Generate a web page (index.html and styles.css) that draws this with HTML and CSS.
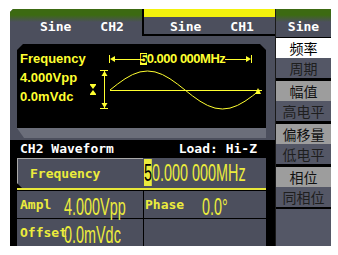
FILE: index.html
```html
<!DOCTYPE html>
<html lang="en">
<head>
    <meta charset="UTF-8">
    <meta name="viewport" content="width=device-width, initial-scale=1.0">
    <title>CH2 Sine</title>
    <link rel="stylesheet" href="styles.css">
</head>
<body>
    <div class="device">
        <div class="main">
            <div class="tabs">
                <div class="tab active"><span>Sine</span><span>CH2</span></div>
                <div class="tab other"><span>Sine</span><span>CH1</span></div>
            </div>

            <div class="frame">
                <div class="screen">
                    <div class="readings">
                        <div>Frequency</div>
                        <div>4.000Vpp</div>
                        <div>0.0mVdc</div>
                    </div>
                    <div class="scope">
                        <div class="freq-line">
                            <svg width="32" height="12" viewBox="0 0 32 12">
                                <line x1="1.5" y1="2" x2="1.5" y2="10" />
                                <polygon points="2,6 7,3 7,9" />
                                <line x1="7" y1="6.5" x2="32" y2="6.5" />
                            </svg>
                            <span class="cursor">5</span><span>0.000 000MHz</span>
                            <svg width="28" height="12" viewBox="0 0 28 12">
                                <line x1="0" y1="6.5" x2="22" y2="6.5" />
                                <polygon points="26,6 21,3 21,9" />
                                <line x1="26.5" y1="2" x2="26.5" y2="10" />
                            </svg>
                        </div>
                        <svg class="wave" width="178" height="48" viewBox="0 0 178 48">
                            <!-- offset marker -->
                            <line x1="2" y1="18.5" x2="8" y2="18.5" />
                            <polygon points="2,19 8,19 5,23" />
                            <polygon points="2,28 8,28 5,24" />
                            <line x1="2" y1="28.5" x2="8" y2="28.5" />
                            <!-- amplitude marker -->
                            <line x1="12" y1="4.5" x2="20" y2="4.5" />
                            <line x1="16.5" y1="4" x2="16.5" y2="42" />
                            <line x1="12" y1="42.5" x2="20" y2="42.5" />
                            <polygon points="16.5,5 13.5,10 19.5,10" />
                            <polygon points="16.5,42 13.5,37 19.5,37" />
                            <!-- axis and wave -->
                            <line x1="22" y1="24.5" x2="174" y2="24.5" />
                            <polyline points="22,24 29.5,18.1 37,12.8 44.5,8.6 52,5.9 59.5,5 67,5.9 74.5,8.6 82,12.8 89.5,18.1 97,24 104.5,29.9 112,35.2 119.5,39.4 127,42.1 134.5,43 142,42.1 149.5,39.4 157,35.2 164.5,29.9 172,24" />
                            <polygon points="167,28 173,28 170,22" />
                        </svg>
                    </div>
                </div>
                <div class="ledge"></div>
            </div>

            <div class="info">
                <span>CH2 Waveform</span>
                <span>Load: Hi-Z</span>
            </div>

            <div class="params">
                <div class="row current">
                    <div class="cell key">Frequency</div>
                    <div class="cell"><span class="value"><span class="cursor">5</span>0.000 000MHz</span></div>
                </div>
                <div class="row">
                    <div class="cell"><span class="label">Ampl</span><span class="value">4.000Vpp</span></div>
                    <div class="cell"><span class="label wide">Phase</span><span class="value">0.0°</span></div>
                </div>
                <div class="row">
                    <div class="cell"><span class="label">Offset</span><span class="value">0.0mVdc</span></div>
                    <div class="cell"></div>
                </div>
            </div>
        </div>

        <div class="menu">
            <div class="menu-head">Sine</div>
            <div class="group">
                <div class="item on">频率</div>
                <div class="item">周期</div>
            </div>
            <div class="group">
                <div class="item key">幅值</div>
                <div class="item">高电平</div>
            </div>
            <div class="group">
                <div class="item key">偏移量</div>
                <div class="item">低电平</div>
            </div>
            <div class="group">
                <div class="item key">相位</div>
                <div class="item">同相位</div>
            </div>
            <div class="menu-rest"></div>
        </div>
    </div>
</body>
</html>
```

FILE: styles.css
```css
body {
    margin: 0;
    background: #fff;
    font-family: "DejaVu Sans Mono", monospace;
}

.device {
    display: flex;
    width: 321px;
    height: 237px;
    margin: 9px 0 0 10px;
}

.main {
    width: 265px;
    display: flex;
    flex-direction: column;
    background: #4c4f5d;
    clip-path: polygon(3px 0, 100% 0, 100% 100%, 0 100%, 0 3px);
}

/* channel tabs */
.tabs {
    display: flex;
    height: 27px;
}

.tab {
    display: flex;
    gap: 29px;
    box-sizing: border-box;
    padding: 10px 0 0 30px;
    color: #fff;
    font-weight: bold;
    font-size: 13px;
    line-height: 15px;
}

.tab.active {
    width: 132px;
    background: linear-gradient(#3c6a12 0, #3c6a12 6px, #4c4f5d 13px);
}

.tab.other {
    width: 133px;
    padding-left: 26px;
    border-left: 2px solid #000;
    border-bottom: 2px solid #000;
    background: linear-gradient(#f2f20c 0, #f2f20c 8px, #4c4f5d 8px);
}

/* waveform screen */
.frame {
    padding: 8px 9px 2px 7px;
}

.screen {
    display: flex;
    height: 84px;
    background: #000;
    clip-path: polygon(6px 0, calc(100% - 6px) 0, 100% 6px, 100% 100%, 0 100%, 0 6px);
}

.ledge {
    height: 10px;
    background: #6b6e7a;
    clip-path: polygon(0 0, 100% 0, 100% 100%, 7px 100%);
}

.readings {
    width: 68px;
    padding: 5px 0 0 3px;
    font-family: "Liberation Sans", Arial, sans-serif;
    font-weight: bold;
    font-size: 13px;
    line-height: 19px;
    color: #ffff30;
}

.scope {
    flex: 1;
    display: flex;
    flex-direction: column;
}

.freq-line {
    display: flex;
    align-items: center;
    height: 12px;
    margin: 9px 0 0 20px;
    font-family: "Liberation Sans", Arial, sans-serif;
    font-weight: bold;
    font-size: 13px;
    line-height: 12px;
    letter-spacing: -0.5px;
    color: #ffff30;
    white-space: nowrap;
}

.freq-line .cursor {
    background: #ffff30;
    color: #000;
}

svg line,
svg polyline {
    stroke: #ffff30;
    stroke-width: 1;
    fill: none;
}

svg polygon {
    fill: #ffff30;
}

.wave {
    display: block;
    margin-top: 1px;
}

/* info bar */
.info {
    display: flex;
    justify-content: space-between;
    height: 18px;
    padding: 0 18px 0 10px;
    background: #000;
    color: #fff;
    font-weight: bold;
    font-size: 13px;
    line-height: 18px;
}

/* parameter table */
.params {
    flex: 1;
    display: flex;
    flex-direction: column;
    gap: 1px;
    padding: 0 9px 0 7px;
    background: #000;
}

.row {
    display: grid;
    grid-template-columns: 126px 122px;
    column-gap: 1px;
    height: 27px;
}

.row.current {
    height: 32px;
    box-sizing: border-box;
    column-gap: 0;
    grid-template-columns: 126px 123px;
    border-bottom: 2px solid #e8e83a;
}

.cell {
    display: flex;
    align-items: center;
    min-width: 0;
    padding-left: 3px;
    background: #4c4f5d;
    color: #ecec3c;
    font-weight: bold;
    font-size: 13px;
    white-space: nowrap;
}

.cell + .cell {
    padding-left: 1px;
}

.cell.key {
    box-sizing: border-box;
    padding-left: 12px;
    border-top: 1px solid #a8a8a8;
    border-left: 1px solid #a8a8a8;
    clip-path: polygon(0 0, 100% 0, 100% 100%, 5px 100%, 0 calc(100% - 5px));
}

.label {
    min-width: 44px;
}

.label.wide {
    min-width: 57px;
}

.value {
    flex: none;
    margin-top: 4px;
    font-family: "Liberation Sans", Arial, sans-serif;
    font-weight: normal;
    font-size: 24px;
    line-height: 20px;
    transform: scaleX(0.6);
    transform-origin: 0 50%;
}

.row.current .value {
    margin-top: 0;
}

.value .cursor {
    background: #ecec3c;
    color: #000;
}

/* soft menu */
.menu {
    width: 55px;
    display: flex;
    flex-direction: column;
    border-left: 1px solid #1a1a1a;
    background: #000;
    font-family: "Noto Sans CJK SC", sans-serif;
    font-size: 14px;
}

.menu-head {
    height: 28px;
    margin-bottom: 1px;
    box-sizing: border-box;
    padding-top: 10px;
    text-align: center;
    font-family: "DejaVu Sans Mono", monospace;
    font-weight: bold;
    font-size: 13px;
    line-height: 15px;
    color: #fff;
    background: linear-gradient(#3c6a12 0, #3c6a12 6px, #4c4f5d 13px);
}

.group {
    margin-bottom: 3px;
}

.group:nth-last-child(2) {
    margin-bottom: 2px;
}

.item {
    height: 20px;
    line-height: 20px;
    text-align: center;
    background: #545766;
    color: #1e1e1e;
}

.item.key {
    background: #9d9d9d;
    color: #111;
}

.item.on {
    background: #fff;
    color: #000;
}

.menu-rest {
    flex: 1;
    background: #545766;
}
```
